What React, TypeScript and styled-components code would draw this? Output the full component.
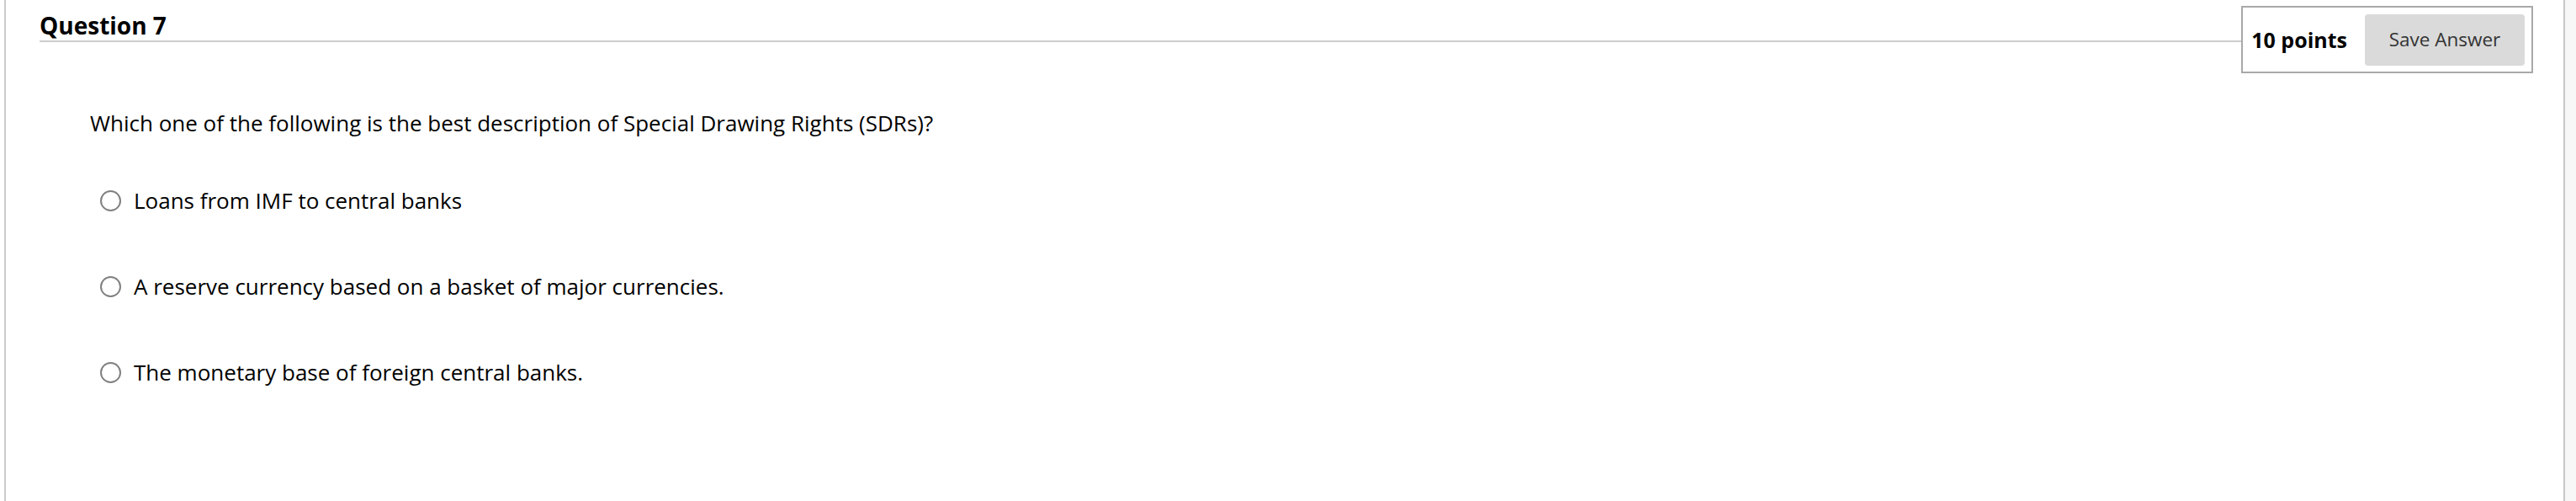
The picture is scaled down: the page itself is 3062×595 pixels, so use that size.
import React from "react";
import styled, { createGlobalStyle } from "styled-components";

const Global = createGlobalStyle`
  html, body { margin: 0; padding: 0; background: #ffffff; }
  body { font-family: "Open Sans", "Noto Sans", sans-serif; color: #111; }
`;

const Page = styled.div`
  display: flex;
  width: 3062px;
  height: 595px;
  overflow: hidden;
  background: #ffffff;
`;

const LeftGutter = styled.div`
  width: 5px;
  flex: none;
`;

const Frame = styled.div`
  flex: none;
  box-sizing: border-box;
  width: 3044px;
  border-left: 2px solid #cccccc;
  border-right: 2px solid #c8c8c8;
  padding-left: 40px;
  padding-right: 36px;
`;

const RightRail = styled.div`
  flex: 1;
  background: #f7f7f7;
`;

const Header = styled.div`
  display: flex;
  align-items: flex-start;
`;

const TitleWrap = styled.div`
  flex: 1;
  height: 48px;
  border-bottom: 2px solid #cccccc;
`;

const Title = styled.h2`
  margin: 0;
  font-size: 28px;
  font-weight: 700;
  line-height: 40px;
  padding-top: 10px;
  color: #000;
`;

const PointsBox = styled.div`
  display: flex;
  align-items: center;
  gap: 21px;
  margin-top: 7px;
  border: 2px solid #a9a9a9;
  padding: 8px 8px 7px 10px;
`;

const Points = styled.span`
  font-size: 25px;
  font-weight: 700;
  color: #000;
  margin-top: -2px;
`;

const SaveButton = styled.button`
  font-family: "Open Sans", "Noto Sans", sans-serif;
  font-size: 22.5px;
  color: #333;
  background: #dadada;
  border: none;
  border-radius: 4px;
  width: 190px;
  height: 61px;
  padding: 0 0 2px;
  cursor: pointer;
`;

const Content = styled.div`
  padding-left: 60px;
`;

const QuestionText = styled.p`
  margin: 41px 0 0;
  font-size: 26px;
  line-height: 36px;
  color: #000;
`;

const Options = styled.ul`
  list-style: none;
  margin: 56px 0 0;
  padding: 0 0 0 12px;
  display: flex;
  flex-direction: column;
  gap: 66px;
`;

const Option = styled.li`
  display: flex;
  align-items: center;
  gap: 15px;
  font-size: 26px;
  line-height: 36px;
  color: #000;
`;

const Radio = styled.span`
  box-sizing: border-box;
  width: 25px;
  height: 25px;
  border: 2px solid #808080;
  border-radius: 50%;
  flex: none;
`;

const answers = [
  "Loans from IMF to central banks",
  "A reserve currency based on a basket of major currencies.",
  "The monetary base of foreign central banks.",
];

export default function App() {
  return (
    <>
      <Global />
      <Page>
        <LeftGutter />
        <Frame>
          <Header>
            <TitleWrap>
              <Title>Question 7</Title>
            </TitleWrap>
            <PointsBox>
              <Points>10 points</Points>
              <SaveButton>Save Answer</SaveButton>
            </PointsBox>
          </Header>
          <Content>
            <QuestionText>
              Which one of the following is the best description of Special Drawing Rights (SDRs)?
            </QuestionText>
            <Options>
              {answers.map((a) => (
                <Option key={a}>
                  <Radio />
                  <span>{a}</span>
                </Option>
              ))}
            </Options>
          </Content>
        </Frame>
        <RightRail />
      </Page>
    </>
  );
}
